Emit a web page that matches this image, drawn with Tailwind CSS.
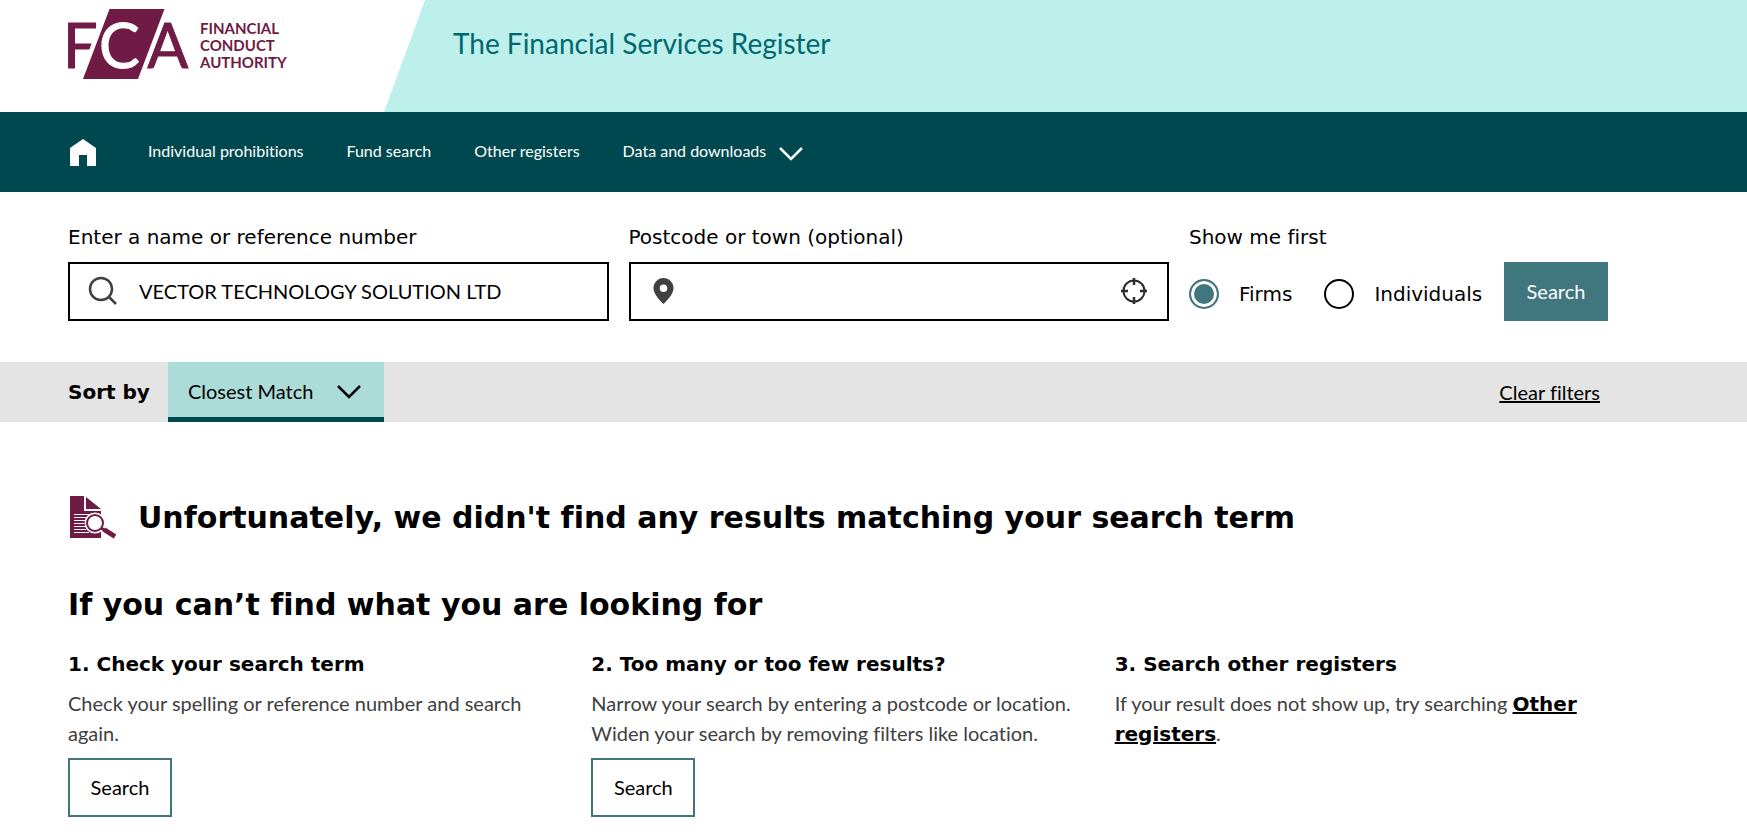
<!DOCTYPE html>
<html lang="en">
<head>
    <meta charset="UTF-8">
    <meta name="viewport" content="width=device-width, initial-scale=1.0">
    <title>The Financial Services Register</title>
    <script src="https://cdn.jsdelivr.net/npm/@tailwindcss/browser@4"></script>
</head>
<body class="bg-white text-black font-[Lato,sans-serif] text-[20px] leading-[30px] [font-variant-ligatures:none]">

    <!-- Header -->
    <header class="flex h-28 bg-[#bdefeb]">
        <a href="#" aria-label="Financial Conduct Authority" class="shrink-0 w-[425px] bg-white [clip-path:polygon(0_0,100%_0,384px_100%,0_100%)]">
            <svg class="w-full h-28" viewBox="0 0 425 112" fill="#701b45">
                <g font-family="Lato" font-size="61">
                    <text x="63" y="68" stroke="#701b45" stroke-width="1">F</text>
                    <text x="147" y="68" stroke="#701b45" stroke-width="1">A</text>
                    <path d="M109.500 9H164.500L138 79H83Z" stroke="#fff" stroke-width="9" paint-order="stroke"/>
                    <text x="99" y="68" fill="#fff" stroke="#fff" stroke-width="1">C</text>
                </g>
                <g font-family="Lato" font-size="15" font-weight="700">
                    <text x="200" y="34">FINANCIAL</text>
                    <text x="200" y="51">CONDUCT</text>
                    <text x="200" y="68">AUTHORITY</text>
                </g>
            </svg>
        </a>
        <h1 class="pl-7 pt-[23px] text-[28px] leading-10 text-[#006870]">The Financial Services Register</h1>
    </header>

    <!-- Navigation -->
    <nav class="flex items-center h-20 pl-[68px] bg-[#00484f] text-white text-base">
        <a href="#" aria-label="Home" class="mr-[50px]">
            <svg class="w-[30px] h-[30px]" viewBox="0 0 30 30" fill="currentColor"><path d="M2 11 15 2l13 9v18h-9V18h-8v11H2z"/></svg>
        </a>
        <div class="flex items-center gap-[43px] pb-[2px]">
            <a href="#">Individual prohibitions</a>
            <a href="#">Fund search</a>
            <a href="#">Other registers</a>
            <button type="button" class="flex items-center gap-3">
                Data and downloads
                <svg class="w-[26px] h-4 mt-1" viewBox="0 0 26 16" fill="none" stroke="currentColor" stroke-width="2.500"><path d="m2 3 11 11L24 3"/></svg>
            </button>
        </div>
    </nav>

    <!-- Search form -->
    <form class="flex items-end gap-5 max-w-[1608px] pl-[68px] pt-[30px] pb-[41px]">
        <div class="flex-1">
            <label for="name" class="block mb-[10px] font-['DejaVu_Sans',sans-serif]">Enter a name or reference number</label>
            <div class="flex items-center h-[59px] border-2 pl-[17px] pb-[2px]">
                <svg class="w-8 h-8 shrink-0" viewBox="0 0 32 32" fill="none" stroke="#404040" stroke-width="2.500"><circle cx="14" cy="14" r="11"/><path d="m21.500 21.500 7.500 7.500"/></svg>
                <input type="text" id="name" value="VECTOR TECHNOLOGY SOLUTION LTD" class="flex-1 min-w-0 h-full pl-5 outline-none">
            </div>
        </div>
        <div class="flex-1">
            <label for="postcode" class="block mb-[10px] font-['DejaVu_Sans',sans-serif]">Postcode or town (optional)</label>
            <div class="flex items-center h-[59px] border-2 pl-[17px] pr-5 pb-[2px]">
                <svg class="w-8 h-8 shrink-0" viewBox="0 0 32 32" fill="#404040"><path fill-rule="evenodd" d="M15.500 3C10 3 5.500 7.500 5.500 13c0 5 4.500 11 10 16 5.500-5 10-11 10-16 0-5.500-4.500-10-10-10m0 6.500a3.800 3.800 0 1 1 0 7.600 3.800 3.800 0 0 1 0-7.600"/></svg>
                <input type="text" id="postcode" class="flex-1 min-w-0 h-full pl-5 outline-none">
                <button type="button" aria-label="Use my location" class="shrink-0">
                    <svg class="w-[26px] h-[26px]" viewBox="0 0 26 26" fill="none" stroke="#2d2d2d" stroke-width="2"><circle cx="13" cy="13" r="10.500"/><path stroke-width="2.500" d="M13 0v7M13 19v7M0 13h7M19 13h7"/></svg>
                </button>
            </div>
        </div>
        <fieldset class="w-[295px] font-['DejaVu_Sans',sans-serif]">
            <legend class="mb-[10px]">Show me first</legend>
            <div class="flex items-center h-[59px] pt-1">
                <input type="radio" id="firms" name="type" checked class="appearance-none size-[30px] rounded-full border-2 border-black checked:border-[#40767e] checked:bg-[#40767e] checked:shadow-[inset_0_0_0_3px_white]">
                <label for="firms" class="ml-5 mr-8">Firms</label>
                <input type="radio" id="individuals" name="type" class="appearance-none size-[30px] rounded-full border-2 border-black checked:border-[#40767e] checked:bg-[#40767e] checked:shadow-[inset_0_0_0_3px_white]">
                <label for="individuals" class="ml-5">Individuals</label>
            </div>
        </fieldset>
        <button type="submit" class="w-[104px] h-[59px] pb-[2px] bg-[#40767e] text-white">Search</button>
    </form>

    <!-- Sort bar -->
    <div class="bg-[#e4e4e4]">
        <div class="flex items-center h-[60px] max-w-[1608px] pl-[68px] pr-2">
            <label for="sort" class="mr-[18px] font-['DejaVu_Sans',sans-serif] font-bold">Sort by</label>
            <div class="relative h-full">
                <select id="sort" class="appearance-none w-[216px] h-full pl-5 pt-[2px] bg-[#acdcd8] border-b-[5px] border-[#00484f]">
                    <option>Closest Match</option>
                </select>
                <svg class="absolute right-[22px] top-[22px] w-[26px] h-4 pointer-events-none" viewBox="0 0 26 16" fill="none" stroke="black" stroke-width="2.500"><path d="m2 2 11 11L24 2"/></svg>
            </div>
            <a href="#" class="ml-auto underline decoration-2">Clear filters</a>
        </div>
    </div>

    <!-- No results -->
    <main class="max-w-[1608px] pl-[68px] pt-[70px]">
        <div class="flex items-center gap-5 mb-10">
            <svg class="w-[50px] h-[50px]" viewBox="0 0 50 50" fill="#701b45">
                <path d="M2 4h14v15h17v27H2z"/>
                <path d="M18 5v12h15z"/>
                <path d="M6 22.500h16M6 25.500h12M6 28.500h11M6 31.500h10M6 34.500h11M6 37.500h12M6 40.500h15" stroke="#fff" stroke-width="1"/>
                <circle cx="27" cy="31" r="10.500" fill="#fff"/>
                <path d="m34 36 13 8" stroke="#fff" stroke-width="8"/>
                <circle cx="27" cy="31" r="8" fill="#fff" stroke="#701b45" stroke-width="2"/>
                <path d="m33 36 4 2.500" stroke="#701b45" stroke-width="3"/>
                <path d="m36 37.500 11 7" stroke="#701b45" stroke-width="5"/>
            </svg>
            <h2 class="font-['DejaVu_Sans',sans-serif] font-bold text-[30px] leading-[45px]">Unfortunately, we didn't find any results matching your search term</h2>
        </div>
        <h2 class="mb-[22px] font-['DejaVu_Sans',sans-serif] font-bold text-[30px] leading-[45px]">If you can’t find what you are looking for</h2>
        <div class="grid grid-cols-3 gap-[30px]">
            <section>
                <h3 class="mb-[9px] font-['DejaVu_Sans',sans-serif] font-bold">1. Check your search term</h3>
                <p class="text-[#404040]">Check your spelling or reference number and search again.</p>
                <button type="button" class="mt-[10px] w-[104px] h-[59px] pb-[2px] border-2 border-[#40767e]">Search</button>
            </section>
            <section>
                <h3 class="mb-[9px] font-['DejaVu_Sans',sans-serif] font-bold">2. Too many or too few results?</h3>
                <p class="text-[#404040]">Narrow your search by entering a postcode or location. Widen your search by removing filters like location.</p>
                <button type="button" class="mt-[10px] w-[104px] h-[59px] pb-[2px] border-2 border-[#40767e]">Search</button>
            </section>
            <section>
                <h3 class="mb-[9px] font-['DejaVu_Sans',sans-serif] font-bold">3. Search other registers</h3>
                <p class="text-[#404040]">If your result does not show up, try searching <a href="#" class="font-['DejaVu_Sans',sans-serif] font-bold leading-none text-black underline decoration-2">Other registers</a>.</p>
            </section>
        </div>
    </main>

</body>
</html>
